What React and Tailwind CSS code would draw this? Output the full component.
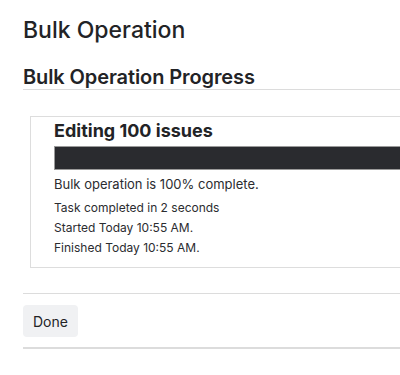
const App = () => {
  return (
    <div className="w-[400px] h-[375px] overflow-hidden bg-white text-[#222326] font-['Inter','Liberation_Sans',sans-serif]">
      <div className="w-[600px] pl-[23px] pt-4">
        <h1 className="text-[23px] leading-[29px] font-medium">Bulk Operation</h1>

        <h2 className="mt-[20px] text-[20px] leading-[24px] font-semibold border-b border-[#dcdcdc] tracking-[-0.1px]">
          Bulk Operation Progress
        </h2>

        {/* Progress box */}
        <div className="mt-[26px] ml-[7px] border border-[#dddddd] pl-[23px] pt-[3px] pb-[9px]">
          <h3 className="text-[18px] leading-[22px] font-bold">Editing 100 issues</h3>
          <div className="mt-[4px] h-[24px] border border-[#9a9a9a] bg-[#2a2b2f]"></div>
          <p className="mt-[4px] text-[13px] leading-[20px] text-[#2b2c30]">
            Bulk operation is 100% complete.
          </p>
          <div className="mt-[4px] text-[12px] leading-[20px] text-[#2b2c30]">
            <p>Task completed in 2 seconds</p>
            <p>Started Today 10:55 AM.</p>
            <p>Finished Today 10:55 AM.</p>
          </div>
        </div>

        <div className="mt-[25px] border-t border-[#dcdcdc]"></div>

        <div className="mt-[11px]">
          <button className="h-[32px] px-[10px] rounded bg-[#f0f1f3] text-[14px] text-[#222326]">
            Done
          </button>
        </div>

        <div className="mt-[10px] border-t-2 border-[#dcdcdc]"></div>
      </div>
    </div>
  );
};

export default App;
